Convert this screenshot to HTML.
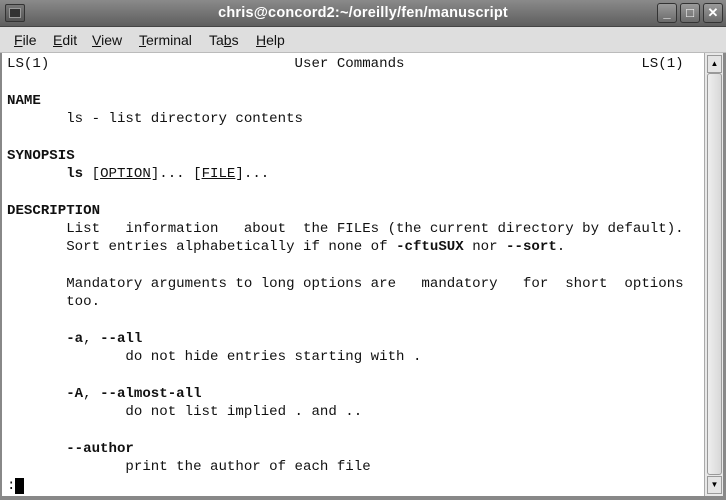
<!DOCTYPE html>
<html><head><meta charset="utf-8"><style>
*{margin:0;padding:0;box-sizing:border-box}
body{width:726px;height:500px;overflow:hidden;background:#888;font-family:"Liberation Sans",sans-serif;position:relative}
#title{position:absolute;left:0;top:0;width:726px;height:27px;background:linear-gradient(#8a8a8a,#5e5e5e);border-bottom:1px solid #444}
#title .t{position:absolute;left:0;width:726px;top:5px;text-align:center;color:#fff;font-size:14.5px;font-weight:bold;letter-spacing:0.2px}
.btn{position:absolute;top:3px;width:20px;height:20px;border:1px solid #333;border-radius:3px;background:linear-gradient(#9a9a9a,#6a6a6a);color:#fff;font-size:13px;text-align:center;line-height:18px;font-weight:bold}
#icon{position:absolute;left:5px;top:4px;width:20px;height:18px;border:1px solid #333;border-radius:2px;background:linear-gradient(#777,#555)}
#icon div{position:absolute;left:3px;top:3px;width:12px;height:10px;background:#333;border:1px solid #999}
#menu{position:absolute;left:0;top:27px;width:726px;height:26px;background:#dedede;border-bottom:1px solid #bbb;font-size:14px;color:#111}
#menu span{position:absolute;top:5px}
#term{position:absolute;left:2px;top:53px;width:702px;height:443px;background:#fff}
pre{position:absolute;left:5px;top:2px;font-family:"Liberation Mono",monospace;font-size:14.1px;line-height:18.33px;color:#111}
b{font-weight:bold}
#sb{position:absolute;left:704px;top:53px;width:19px;height:443px;background:#e8e8e8;border-left:1px solid #aaa}
#thumb{position:absolute;left:2px;top:20px;width:15px;height:402px;background:linear-gradient(90deg,#eee,#d8d8d8);border:1px solid #999;border-radius:3px}
.ar{position:absolute;left:2px;width:15px;height:18px;background:#e4e4e4;border:1px solid #999;font-size:8px;text-align:center;line-height:16px;color:#000}
</style></head><body>
<div id="title"><div id="icon"><div></div></div><div class="t">chris@concord2:~/oreilly/fen/manuscript</div>
<div class="btn" style="left:657px">_</div><div class="btn" style="left:680px">□</div><div class="btn" style="left:703px">✕</div></div>
<div id="menu"><span style="left:14px"><u>F</u>ile</span><span style="left:53px"><u>E</u>dit</span><span style="left:92px"><u>V</u>iew</span><span style="left:139px"><u>T</u>erminal</span><span style="left:209px">Ta<u>b</u>s</span><span style="left:256px"><u>H</u>elp</span></div>
<div id="term"><pre>LS(1)                             User Commands                            LS(1)

<b>NAME</b>
       ls - list directory contents

<b>SYNOPSIS</b>
       <b>ls</b> [<u>OPTION</u>]... [<u>FILE</u>]...

<b>DESCRIPTION</b>
       List   information   about  the FILEs (the current directory by default).
       Sort entries alphabetically if none of <b>-cftuSUX</b> nor <b>--sort</b>.

       Mandatory arguments to long options are   mandatory   for  short  options
       too.

       <b>-a</b>, <b>--all</b>
              do not hide entries starting with .

       <b>-A</b>, <b>--almost-all</b>
              do not list implied . and ..

       <b>--author</b>
              print the author of each file
:<span style="background:#000">&nbsp;</span></pre></div>
<div id="sb"><div class="ar" style="top:2px">▲</div><div id="thumb"></div><div class="ar" style="top:423px">▼</div></div>
</body></html>
